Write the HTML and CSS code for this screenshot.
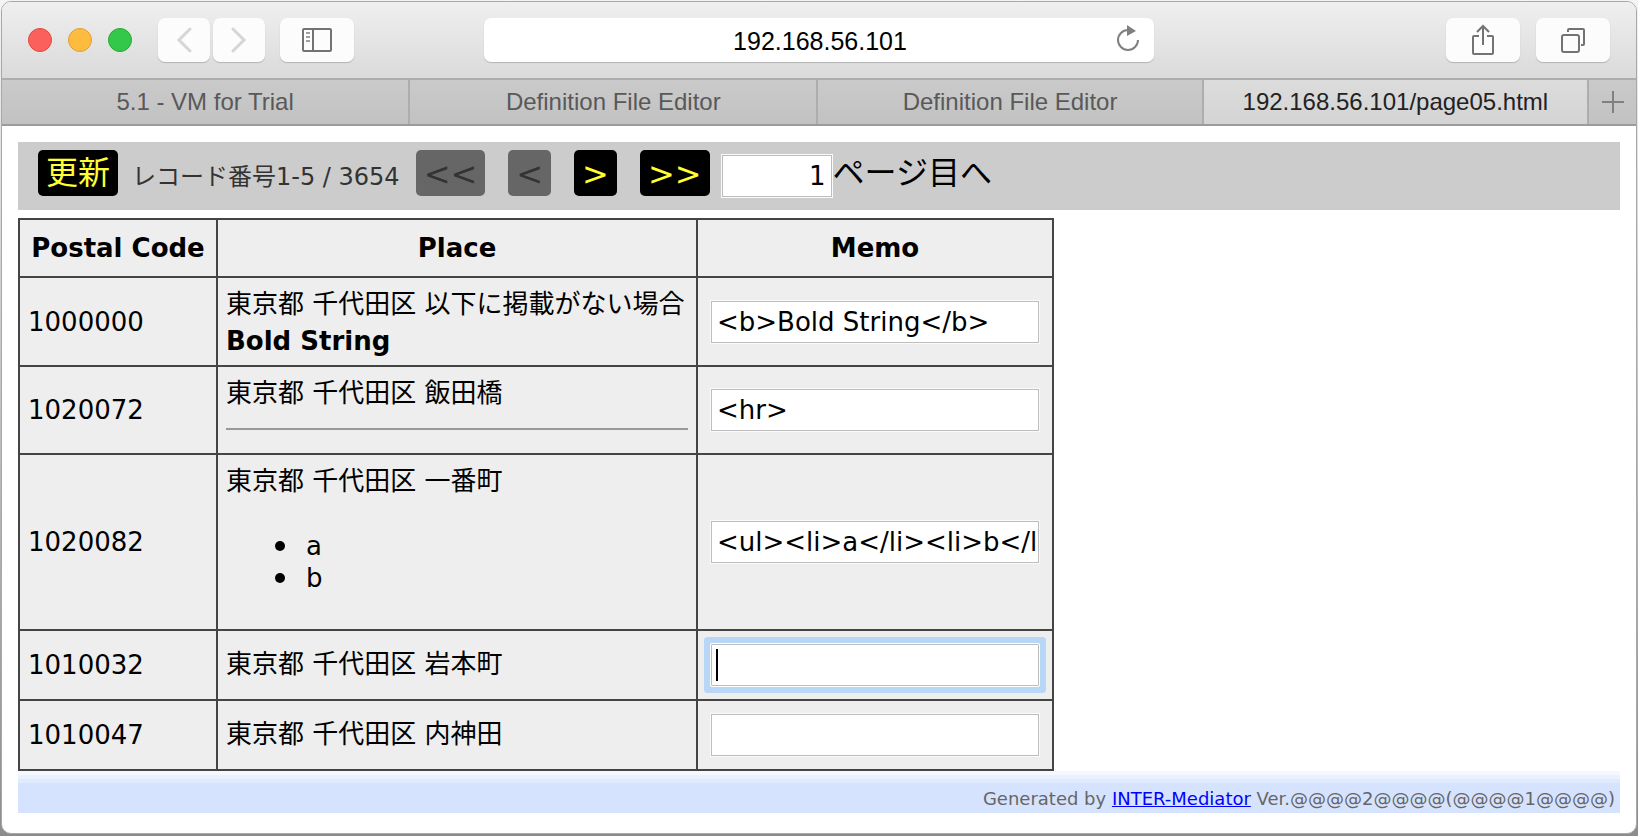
FILE: index.html
```html
<!DOCTYPE html>
<html lang="ja">
<head>
<meta charset="utf-8">
<title>192.168.56.101/page05.html</title>
<link rel="stylesheet" href="styles.css">
</head>
<body>
<div class="window">
  <header class="toolbar">
    <div class="lights">
      <button class="light light-close" aria-label="Close"></button>
      <button class="light light-min" aria-label="Minimize"></button>
      <button class="light light-zoom" aria-label="Zoom"></button>
    </div>
    <div class="history">
      <button class="tool tool-nav" aria-label="Back">
        <svg width="16" height="26" viewBox="0 0 16 26"><path d="M14 2 3 13l11 11" fill="none" stroke="#d6d6d6" stroke-width="3" stroke-linecap="round"/></svg>
      </button>
      <button class="tool tool-nav" aria-label="Forward">
        <svg width="16" height="26" viewBox="0 0 16 26"><path d="M2 2 13 13 2 24" fill="none" stroke="#d6d6d6" stroke-width="3" stroke-linecap="round"/></svg>
      </button>
    </div>
    <button class="tool" aria-label="Sidebar">
      <svg width="30" height="24" viewBox="0 0 30 24" fill="none" stroke="#737373" stroke-width="2"><rect x="1" y="1" width="28" height="22" rx="1"/><path d="M11 1v22"/><path d="M4 5h4M4 9h4M4 13h4" stroke="#a0a0a0"/></svg>
    </button>
    <div class="address">
      <input class="address-input" type="text" value="192.168.56.101" aria-label="Address">
      <button class="reload" aria-label="Reload">
        <svg width="24" height="28" viewBox="0 0 24 28"><path d="M12 5A10 10 0 1 0 22 15" fill="none" stroke="#808080" stroke-width="2"/><path d="M11 0v11l9-5z" fill="#808080"/></svg>
      </button>
    </div>
    <div class="actions">
      <button class="tool" aria-label="Share">
        <svg width="24" height="32" viewBox="0 0 24 32" fill="none" stroke="#737373" stroke-width="2"><path d="M8 12H3q-1 0-1 1v16q0 1 1 1h18q1 0 1-1V13q0-1-1-1h-5M12 21V2M6 8l6-6 6 6"/></svg>
      </button>
      <button class="tool" aria-label="Show all tabs">
        <svg width="26" height="26" viewBox="0 0 26 26" fill="none" stroke="#737373" stroke-width="2"><rect x="2" y="8" width="17" height="17" rx="2"/><path d="M8 5V3q0-1 1-1h14q1 0 1 1v14q0 1-1 1h-2"/></svg>
      </button>
    </div>
  </header>
  <nav class="tabs">
    <button class="tab tab-wide">5.1 - VM for Trial</button>
    <button class="tab tab-wide">Definition File Editor</button>
    <button class="tab">Definition File Editor</button>
    <button class="tab tab-active">192.168.56.101/page05.html</button>
    <button class="tab-add" aria-label="New tab">
      <svg width="22" height="22" viewBox="0 0 22 22"><path d="M11 0v22M0 11h22" stroke="#808080" stroke-width="2"/></svg>
    </button>
  </nav>
  <main class="page">
    <div class="pager">
      <button class="pager-button">更新</button>
      <span class="pager-info">レコード番号1-5 / 3654</span>
      <div class="pager-moves">
        <button class="pager-button pager-arrow" disabled>&lt;&lt;</button>
        <button class="pager-button pager-arrow" disabled>&lt;</button>
        <button class="pager-button pager-arrow">&gt;</button>
        <button class="pager-button pager-arrow">&gt;&gt;</button>
      </div>
      <label class="pager-jump"><input class="field field-page" type="text" value="1">ページ目へ</label>
    </div>
    <table class="records">
      <colgroup><col class="col-code"><col class="col-place"><col class="col-memo"></colgroup>
      <thead>
        <tr><th>Postal Code</th><th>Place</th><th>Memo</th></tr>
      </thead>
      <tbody>
        <tr>
          <td>1000000</td>
          <td><div class="place">東京都 千代田区 以下に掲載がない場合</div><b>Bold String</b></td>
          <td><input class="field" type="text" aria-label="Memo 1000000" value="&lt;b&gt;Bold String&lt;/b&gt;"></td>
        </tr>
        <tr>
          <td>1020072</td>
          <td><div class="place">東京都 千代田区 飯田橋</div><hr class="rule"></td>
          <td><input class="field" type="text" aria-label="Memo 1020072" value="&lt;hr&gt;"></td>
        </tr>
        <tr>
          <td>1020082</td>
          <td><div class="place">東京都 千代田区 一番町</div><ul class="list"><li>a</li><li>b</li></ul></td>
          <td><input class="field" type="text" aria-label="Memo 1020082" value="&lt;ul&gt;&lt;li&gt;a&lt;/li&gt;&lt;li&gt;b&lt;/li&gt;&lt;/ul&gt;"></td>
        </tr>
        <tr>
          <td>1010032</td>
          <td><div class="place">東京都 千代田区 岩本町</div></td>
          <td><input class="field field-focus" type="text" aria-label="Memo 1010032"></td>
        </tr>
        <tr>
          <td>1010047</td>
          <td><div class="place">東京都 千代田区 内神田</div></td>
          <td><input class="field" type="text" aria-label="Memo 1010047"></td>
        </tr>
      </tbody>
    </table>
    <footer class="credit">Generated by <a href="#">INTER-Mediator</a> Ver.@@@@2@@@@(@@@@1@@@@)</footer>
  </main>
</div>
</body>
</html>
```
FILE: styles.css
```css
* {
  box-sizing: border-box;
}

body {
  margin: 0;
  padding: 1px 1px 2px;
  min-height: 100vh;
  display: flex;
  background: linear-gradient(#f4f4f4, #8c8c8c);
  font: 26px/32px "DejaVu Sans", "Noto Sans CJK JP", sans-serif;
  color: #000;
}

button,
input {
  font: inherit;
  margin: 0;
  padding: 0;
  border: 0;
}

.window {
  flex: 1;
  min-width: 0;
  overflow: hidden;
  border: 1px solid #a8a8a8;
  border-radius: 10px;
  background: #fff;
}

.toolbar {
  display: flex;
  align-items: center;
  height: 76px;
  padding: 0 26px;
  background: linear-gradient(#efefef, #dadada);
}

.lights {
  display: flex;
  gap: 16px;
  margin-right: 26px;
}

.light {
  width: 24px;
  height: 24px;
  border: 1px solid;
  border-radius: 50%;
}

.light-close {
  background: #fc605c;
  border-color: #e14942;
}

.light-min {
  background: #fdbc40;
  border-color: #dfa033;
}

.light-zoom {
  background: #34c84a;
  border-color: #27aa35;
}

.history {
  display: flex;
  gap: 3px;
  margin-right: 15px;
}

.tool {
  display: flex;
  align-items: center;
  justify-content: center;
  width: 74px;
  height: 44px;
  border-radius: 7px;
  background: #fcfcfc;
  box-shadow: 0 1px 1px #b4b4b4;
}

.tool-nav {
  width: 52px;
}

.address {
  display: flex;
  align-items: center;
  flex: 0 1 670px;
  height: 44px;
  margin: 0 auto 0 130px;
  padding: 0 14px 0 40px;
  border-radius: 7px;
  background: #fff;
  box-shadow: 0 1px 1px #b4b4b4;
}

.address-input {
  flex: 1;
  min-width: 0;
  height: 44px;
  padding-top: 2px;
  background: none;
  font: 25px/30px "Liberation Sans", sans-serif;
  text-align: center;
}

.reload {
  display: flex;
  padding-bottom: 2px;
  background: none;
}

.actions {
  display: flex;
  gap: 16px;
}

.tabs {
  display: flex;
  height: 48px;
  border-top: 2px solid #adadad;
  border-bottom: 2px solid #9c9c9c;
  background: linear-gradient(#cacaca, #c2c2c2);
}

.tab {
  flex: 385 1 0;
  min-width: 0;
  border-right: 2px solid #adadad;
  background: none;
  color: #595959;
  font: 24px/32px "Liberation Sans", sans-serif;
}

.tab-wide {
  flex-grow: 408;
}

.tab-active {
  background: linear-gradient(#dcdcdc, #d4d4d4);
  color: #222;
}

.tab-add {
  display: flex;
  align-items: center;
  justify-content: center;
  width: 47px;
  background: none;
}

.page {
  padding: 16px;
}

.pager {
  display: flex;
  align-items: center;
  height: 68px;
  margin-bottom: 8px;
  padding: 0 20px 6px;
  background: #ccc;
  font-size: 32px;
}

.pager-button {
  height: 46px;
  padding: 0 8px;
  border-radius: 5px;
  background: #000;
  color: #ff3;
  line-height: 46px;
}

.pager-arrow {
  padding-top: 2px;
  line-height: 44px;
}

.pager-button:disabled {
  background: #666;
  color: #333;
}

.pager-info {
  margin: 8px 16px 0 14px;
  font-size: 24px;
  color: #333;
}

.pager-moves {
  display: flex;
  gap: 23px;
}

.pager-jump {
  display: flex;
  align-items: center;
  margin-left: 12px;
}

.field {
  display: block;
  width: 328px;
  height: 42px;
  margin: 5px;
  padding: 0 0 0 5px;
  border: 1px solid #bdbdbd;
  background: #fff;
  box-shadow: 0 0 0 1px #fafafa;
  outline: 0;
}

.field-page {
  width: 110px;
  margin: 6px 1px 0 0;
  padding-right: 5px;
  font-size: 26px;
  text-align: right;
}

.field-focus {
  border-radius: 1px;
  background: linear-gradient(#000, #000) 4px center / 2px 32px no-repeat #fff;
  box-shadow: 0 0 0 1px #fff, 0 0 0 7px #b8d6f6;
}

.records {
  width: 1036px;
  border-collapse: collapse;
  table-layout: fixed;
}

.records th,
.records td {
  padding: 8px;
  border: 2px solid #444;
  background: #eee;
}

.records th {
  height: 58px;
}

.col-code {
  width: 198px;
}

.col-place {
  width: 480px;
}

.place {
  padding-bottom: 2px;
  line-height: 37px;
  white-space: nowrap;
}

.rule {
  height: 2px;
  margin: 14px 0 15px;
  border: 0;
  background: #999;
}

.list {
  margin: 28px 0 27px;
  padding-left: 49px;
  list-style: none;
}

.list li {
  display: flex;
  align-items: center;
  gap: 21px;
}

.list li::before {
  content: "";
  width: 10px;
  height: 10px;
  border-radius: 50%;
  background: #000;
}

.credit {
  height: 42px;
  padding: 12px 5px 0;
  background: linear-gradient(#f5f9ff 4px, #eaf1ff 4px 8px, #e0eafe 8px 12px, #d6e3fe 12px);
  color: #666;
  font-size: 18px;
  text-align: right;
}

.credit a {
  color: #00f;
}
```
